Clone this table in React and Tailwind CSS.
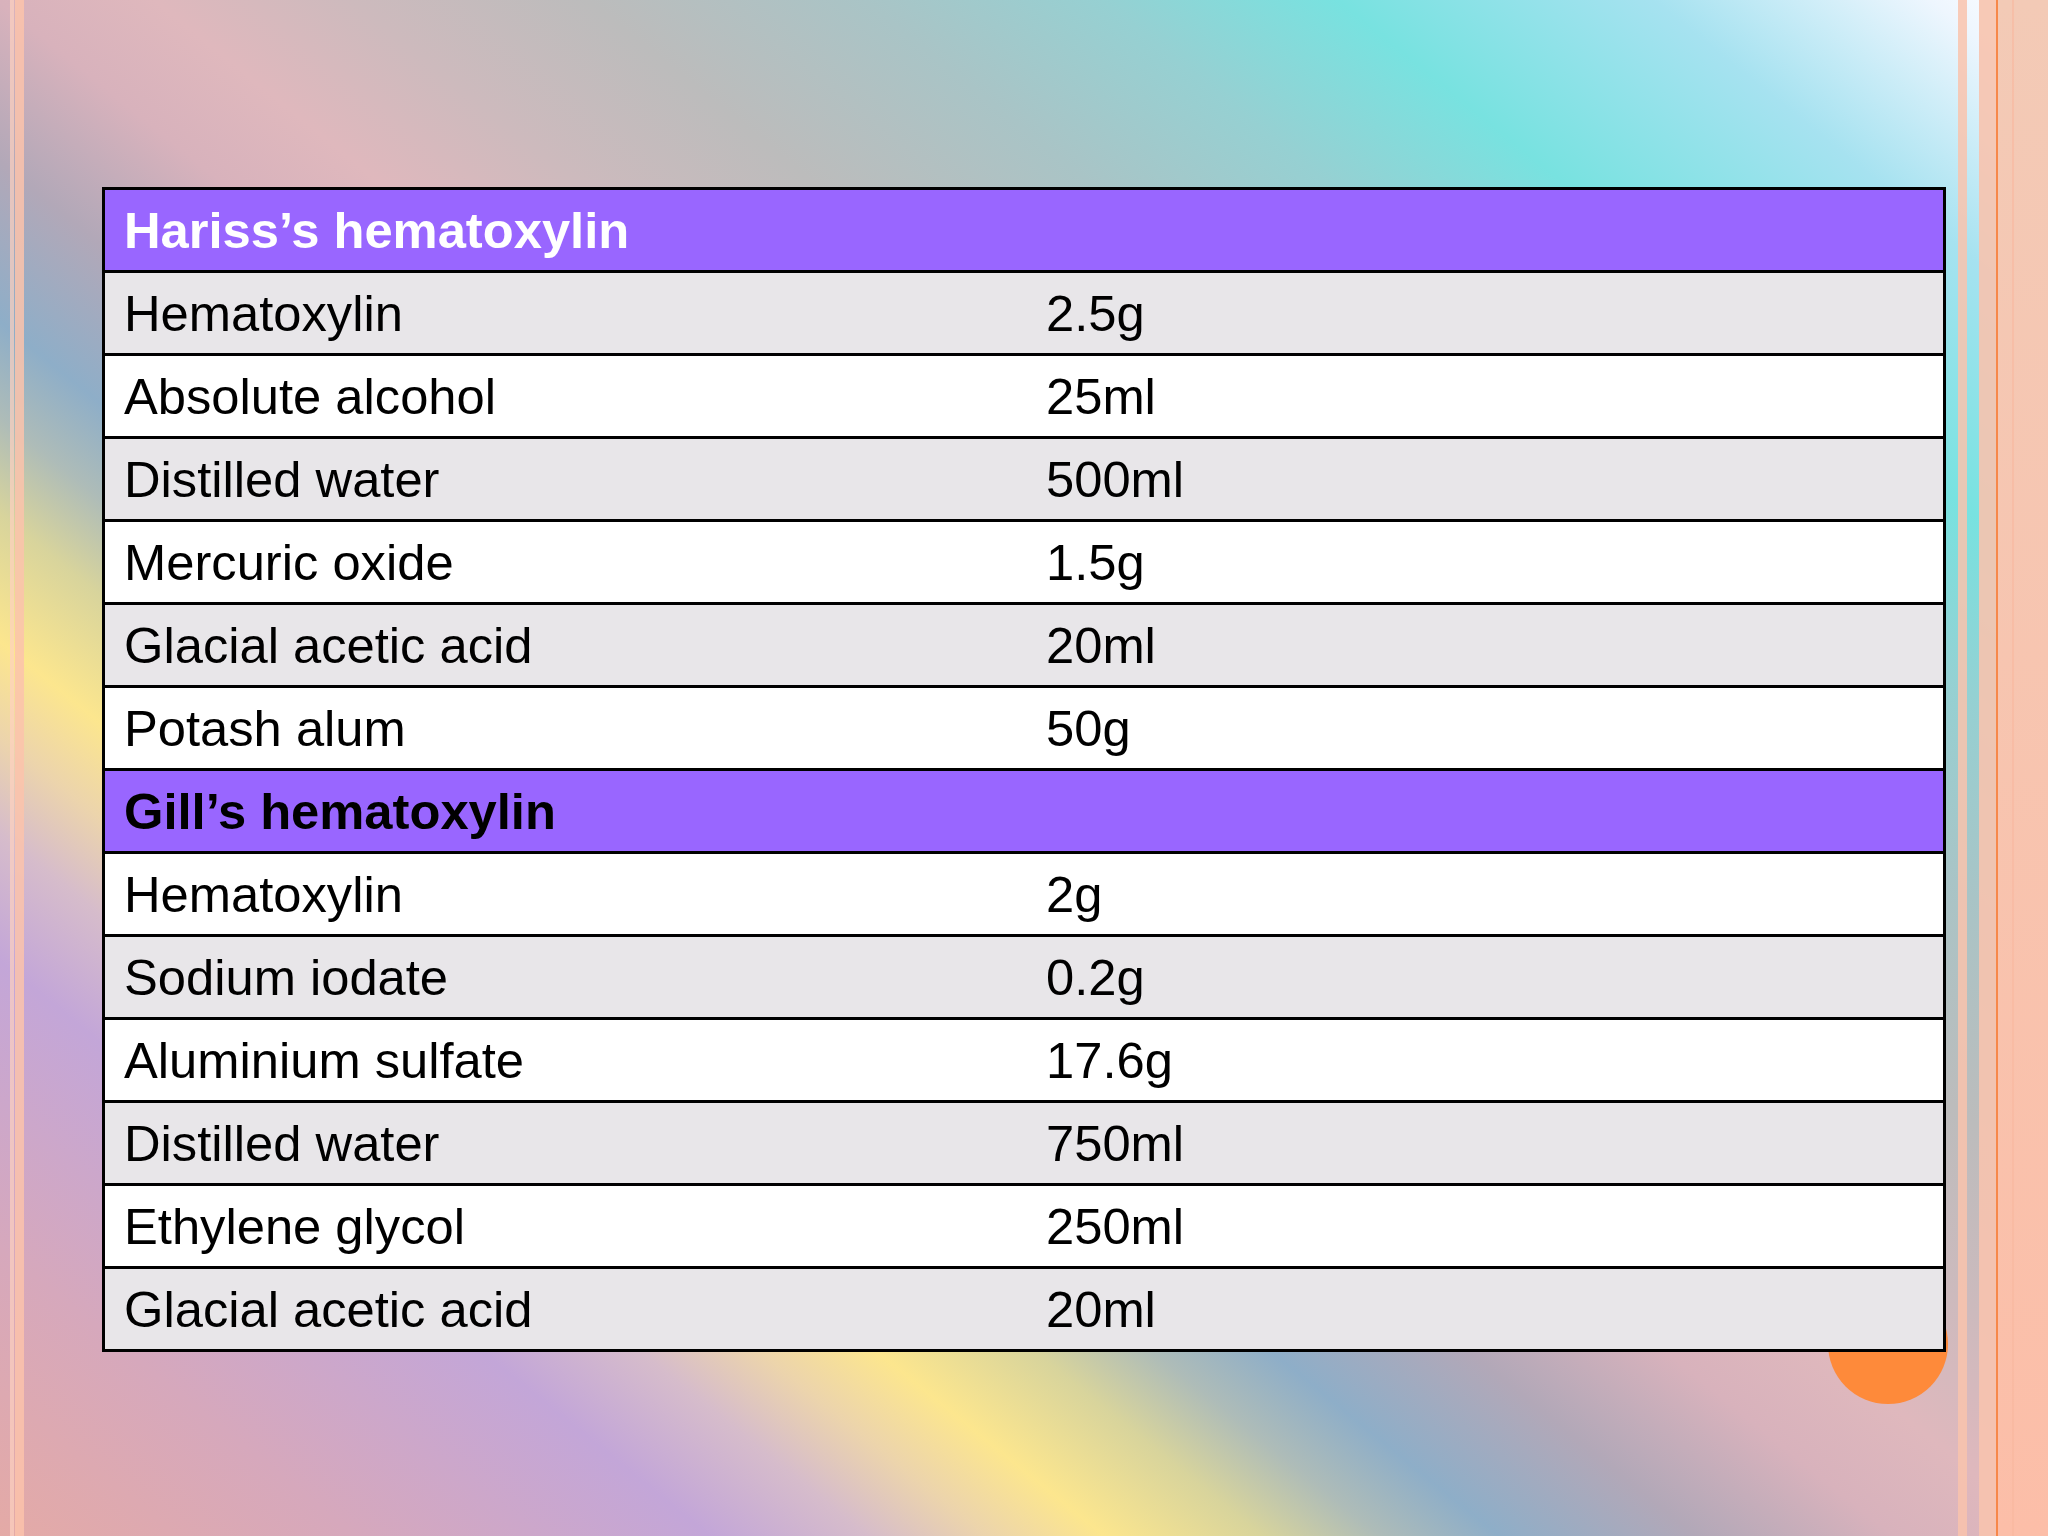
import React from 'react'

const rows = [
  { type: 'head', label: 'Hariss’s hematoxylin', text: 'text-white' },
  { label: 'Hematoxylin', value: '2.5g', shade: true },
  { label: 'Absolute alcohol', value: '25ml' },
  { label: 'Distilled water', value: '500ml', shade: true },
  { label: 'Mercuric oxide', value: '1.5g' },
  { label: 'Glacial acetic acid', value: '20ml', shade: true },
  { label: 'Potash alum', value: '50g' },
  { type: 'head', label: 'Gill’s hematoxylin', text: 'text-black' },
  { label: 'Hematoxylin', value: '2g' },
  { label: 'Sodium iodate', value: '0.2g', shade: true },
  { label: 'Aluminium sulfate', value: '17.6g' },
  { label: 'Distilled water', value: '750ml', shade: true },
  { label: 'Ethylene glycol', value: '250ml' },
  { label: 'Glacial acetic acid', value: '20ml', shade: true },
]

const Row = ({ row, first }) => {
  if (row.type === 'head') {
    return (
      <div className={`flex-1 flex items-center bg-[#9966ff] pl-[19px] pt-[3px] ${first ? '' : 'border-t-[3px] border-black'}`}>
        <span className={`text-[50.7px] font-bold leading-none ${row.text}`}>{row.label}</span>
      </div>
    )
  }
  return (
    <div className={`flex-1 grid grid-cols-[922px_1fr] items-center pl-[19px] pt-[3px] border-t-[3px] border-black ${row.shade ? 'bg-[#e8e6e9]' : 'bg-white'}`}>
      <span className='text-[50.7px] leading-none text-black'>{row.label}</span>
      <span className='text-[50.7px] leading-none text-black'>{row.value}</span>
    </div>
  )
}

const App = () => {
  return (
    <div
      className="flex w-[2048px] h-[1536px] overflow-hidden font-['Liberation_Sans',Arial,sans-serif] bg-[linear-gradient(39deg,#e4aaa6_0%,#d6a8bc_9%,#c3a6d8_18%,#d6bccb_22%,#ecd4ac_25%,#fce68e_28%,#d8d49c_32%,#aebcb8_35%,#8eaec8_38%,#b2a8b8_43%,#d8b2bc_48%,#dfb8bd_52%,#cdbabd_57%,#bcbcbc_63%,#a9c4c6_70%,#96d0d2_76%,#78e2e0_82%,#a6e2f0_90%,#eef6fe_97%,#ffffff_100%)]"
    >
      {/* left stripes */}
      <div className='w-[10px]' />
      <div className='w-[4px] bg-[#fdd2c0]/70' />
      <div className='w-[1px]' />
      <div className='w-[9px] bg-[#fcc3ab]/85' />
      <div className='w-[78px]' />

      <div className='w-[1844px] pt-[187px]'>
        <div className='relative'>
          <div className='absolute right-[-2px] bottom-[-52px] w-[120px] h-[120px] rounded-full bg-[#fe8a3a]' />
          <div className='relative flex flex-col h-[1165px] border-[3px] border-black'>
            {rows.map((r, i) => <Row key={i} row={r} first={i === 0} />)}
          </div>
        </div>
      </div>

      {/* right stripes */}
      <div className='w-[12px]' />
      <div className='w-[9px] bg-[#f9c3ad]/85' />
      <div className='w-[12px]' />
      <div className='w-[17px] bg-[#f7c3ae]/90' />
      <div className='w-[2px] bg-[#f7884a]' />
      <div className='flex-1 flex bg-gradient-to-b from-[#f3cab6] to-[#fcbea8]'>
        <div className='w-[14px]' />
        <div className='w-[2px] bg-[#f9b89e]/60' />
      </div>
    </div>
  )
}

export default App
